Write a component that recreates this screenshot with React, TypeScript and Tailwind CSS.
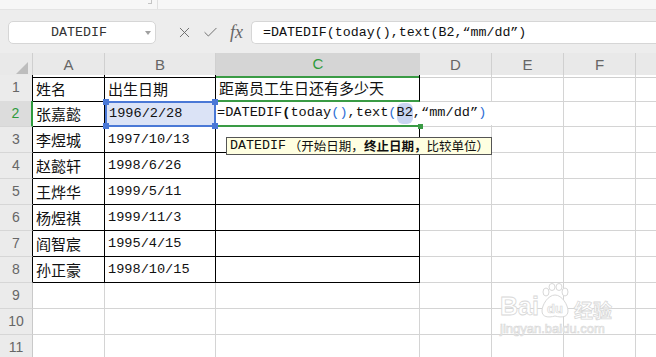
import { X, Check } from "lucide-react";

const mono = "font-['Liberation_Mono','Noto_Sans_CJK_SC',monospace]";
const cjk = "font-['Noto_Sans_CJK_SC',sans-serif]";
const cols = "grid grid-cols-[33px_72px_111px_204px_72px_72px_72px_1fr]";

const people = [
  ["姓名", "出生日期", "距离员工生日还有多少天"],
  ["张嘉懿", "1996/2/28", ""],
  ["李煜城", "1997/10/13", ""],
  ["赵懿轩", "1998/6/26", ""],
  ["王烨华", "1999/5/11", ""],
  ["杨煜祺", "1999/11/3", ""],
  ["阎智宸", "1995/4/15", ""],
  ["孙正豪", "1998/10/15", ""],
];

function Handle({ pos }: { pos: string }) {
  return <span className={`absolute w-[6px] h-[6px] bg-[#4a78d6] z-20 ${pos}`} />;
}

function CellEditor() {
  // in-place editor for C2, text runs over D2
  return (
    <div
      className={`absolute left-0 top-[1px] h-[23px] w-[276px] bg-white z-10 flex items-center pl-[1px] whitespace-nowrap text-[13.6px] text-[#111] ${mono}`}
    >
      <span>=DATEDIF</span>
      <span className="font-bold">(</span>
      <span>today</span>
      <span className="text-[#2f6fd6]">()</span>
      <span>,text</span>
      <span className="text-[#2f6fd6]">(</span>
      <span className="bg-[#c9d5f1] rounded-[6px]">B2</span>
      <span>,“mm/dd”</span>
      <span className="text-[#2f6fd6]">)</span>
    </div>
  );
}

function Row({ n, data }: { n: number; data?: string[] }) {
  const inRange = !!data;
  const isActive = n === 2;
  const dataBorder = inRange ? "border-r border-b border-black" : "border-r border-b border-[#d4d4d4]";
  return (
    <div className={`${cols} h-[26px]`}>
      <div
        className={`flex items-center justify-center border-b border-[#d6d6d6] text-[14px] font-['Liberation_Sans',sans-serif] ${
          isActive
            ? "bg-[#dcdcdc] border-r-2 border-r-[#2e9a3c] text-[#2e9a3c]"
            : inRange
            ? "bg-[#ebebeb] border-r border-r-black text-[#666]"
            : "bg-[#ebebeb] border-r border-r-[#c9c9c9] text-[#666]"
        }`}
      >
        {n}
      </div>
      <div className={`${dataBorder} flex items-center pl-[3px] pt-[2px] text-[15px] text-[#111] ${cjk}`}>
        {data?.[0]}
      </div>
      {isActive ? (
        <div className="relative bg-[#dbe3f6] border-2 border-[#4a78d6] flex items-center pl-[2px] pt-[1px]">
          <span className={`text-[13.6px] text-[#111] ${mono}`}>{data?.[1]}</span>
          <Handle pos="-left-[4px] -top-[4px]" />
          <Handle pos="-right-[4px] -top-[4px]" />
          <Handle pos="-left-[4px] -bottom-[4px]" />
          <Handle pos="-right-[4px] -bottom-[4px]" />
        </div>
      ) : (
        <div
          className={`${dataBorder} flex items-center pl-[3px] pt-[2px] text-[13.6px] text-[#111] ${
            n === 1 ? cjk + " text-[15px]" : mono
          }`}
        >
          {data?.[1]}
        </div>
      )}
      {isActive ? (
        <div className="relative border-b-2 border-[#3a9b45]">
          <CellEditor />
          <span className="absolute -right-[3px] -bottom-[4px] w-[5px] h-[5px] bg-[#3a9b45] z-20" />
        </div>
      ) : (
        <div
          className={`${
            n === 1 ? "border-r border-black border-b-2 border-b-[#3a9b45]" : dataBorder
          } flex items-center pl-[3px] pt-[2px] text-[15px] text-[#111] ${cjk}`}
        >
          {data?.[2]}
        </div>
      )}
      <div className="border-r border-b border-[#d4d4d4]" />
      <div className="border-r border-b border-[#d4d4d4]" />
      <div className="border-r border-b border-[#d4d4d4]" />
      <div className="border-b border-[#d4d4d4]" />
    </div>
  );
}

export default function App() {
  return (
    <div className="relative w-[656px] h-[357px] overflow-hidden bg-white">
      {/* leftover of the ribbon */}
      <div className="h-[10px] bg-[#f7f7f7] border-b border-[#e4e4e4] flex">
        <div className="ml-[148px] w-[4px] h-[4px] border-r border-b border-[#c4c4c4]" />
        <div className="ml-[5px] w-px h-[9px] bg-[#e0e0e0]" />
      </div>

      {/* name box + formula bar */}
      <div className="h-[43px] bg-[#ededed] flex items-start pt-[11px]">
        <div className="ml-[8px] w-[148px] h-[23px] bg-white rounded-[5px] border border-[#d6d6d6] flex items-center">
          <span className={`flex-1 text-center text-[13.3px] text-[#333] pl-[4px] ${mono}`}>DATEDIF</span>
          <span className="mr-[4px] w-0 h-0 border-x-[3px] border-x-transparent border-t-[4px] border-t-[#a0a0a0]" />
        </div>
        <div className="ml-[20px] h-[23px] flex items-center gap-[9px] text-[#666]">
          <X size={17} strokeWidth={1.3} />
          <Check size={17} strokeWidth={1.3} />
          <span className="font-['Liberation_Serif',serif] italic text-[18px] leading-none -mt-[2px] ml-[2px]">fx</span>
        </div>
        <div className="ml-[8px] flex-1 h-[23px] bg-white rounded-l-[5px] border border-r-0 border-[#d6d6d6] flex items-center pl-[11px]">
          <span className={`text-[13.3px] text-[#111] whitespace-nowrap ${mono}`}>
            =DATEDIF(today(),text(B2,“mm/dd”)
          </span>
        </div>
      </div>

      {/* column headers */}
      <div className={`${cols} h-[22px] bg-[#e9e9e9] text-[15px] font-['Liberation_Sans',sans-serif] text-[#666]`}>
        <div className="border-r border-[#cfcfcf] border-b border-b-[#cfcfcf] flex items-end justify-end pr-[4px] pb-[3px]">
          <svg width="12" height="12" viewBox="0 0 12 12">
            <polygon points="12,0 12,12 0,12" fill="#bdbdbd" />
          </svg>
        </div>
        <div className="border-r border-[#d0d0d0] border-b border-b-black flex items-center justify-center">A</div>
        <div className="border-r border-[#d0d0d0] border-b border-b-black flex items-center justify-center">B</div>
        <div className="bg-[#d5d5d5] border-b-2 border-[#3a9b45] flex items-center justify-center text-[#2e9a3c]">C</div>
        <div className="border-r border-[#d0d0d0] border-b border-b-[#cfcfcf] flex items-center justify-center">D</div>
        <div className="border-r border-[#d0d0d0] border-b border-b-[#cfcfcf] flex items-center justify-center">E</div>
        <div className="border-r border-[#d0d0d0] border-b border-b-[#cfcfcf] flex items-center justify-center">F</div>
        <div className="border-b border-[#cfcfcf]" />
      </div>

      {[1, 2, 3, 4, 5, 6, 7, 8, 9, 10, 11].map((n) => (
        <Row key={n} n={n} data={people[n - 1]} />
      ))}

      {/* function hint */}
      <div
        className={`absolute left-[226px] top-[137px] h-[18px] pl-[3px] pr-[2px] bg-[#ffffe1] border border-[#555] flex items-center whitespace-nowrap text-[#111] z-30 ${cjk}`}
      >
        <span className={`text-[13.3px] ${mono}`}>DATEDIF</span>
        <span className="text-[12.5px] ml-[3px]">（开始日期，</span>
        <span className="text-[12.5px] font-bold">终止日期，</span>
        <span className="text-[12.5px]">比较单位）</span>
      </div>

      {/* watermark */}
      <div className="absolute left-[500px] top-[283px] z-30 pointer-events-none">
        <div className="flex items-end">
          <span className="font-['Liberation_Sans',sans-serif] font-bold text-[25px] leading-none text-white [-webkit-text-stroke:0.8px_#d8d8d8]">
            Bai
          </span>
          <svg width="34" height="36" viewBox="0 0 34 36" className="-ml-[1px]">
            <g fill="white" stroke="#d8d8d8" strokeWidth="1">
              <ellipse cx="8" cy="9" rx="3" ry="4" />
              <ellipse cx="14" cy="4" rx="3" ry="3.5" />
              <ellipse cx="21" cy="4" rx="3" ry="3.5" />
              <ellipse cx="27" cy="9" rx="3" ry="4" />
              <path d="M17 12 C 10 12 4 22 4 28 C 4 34 10 35 17 33 C 24 35 30 34 30 28 C 30 22 24 12 17 12 Z" />
            </g>
            <text x="17" y="30" textAnchor="middle" fontSize="13" fontWeight="bold" fontFamily="Liberation Sans" fill="white" stroke="#d8d8d8" strokeWidth="0.7">
              du
            </text>
          </svg>
          <span className={`ml-[2px] text-[19px] leading-none font-bold text-white [-webkit-text-stroke:0.8px_#d8d8d8] ${cjk}`}>
            经验
          </span>
        </div>
        <div className="font-['Liberation_Sans',sans-serif] text-[13px] leading-none mt-[3px] text-white [-webkit-text-stroke:0.7px_#d8d8d8]">
          jingyan.baidu.com
        </div>
      </div>
    </div>
  );
}
